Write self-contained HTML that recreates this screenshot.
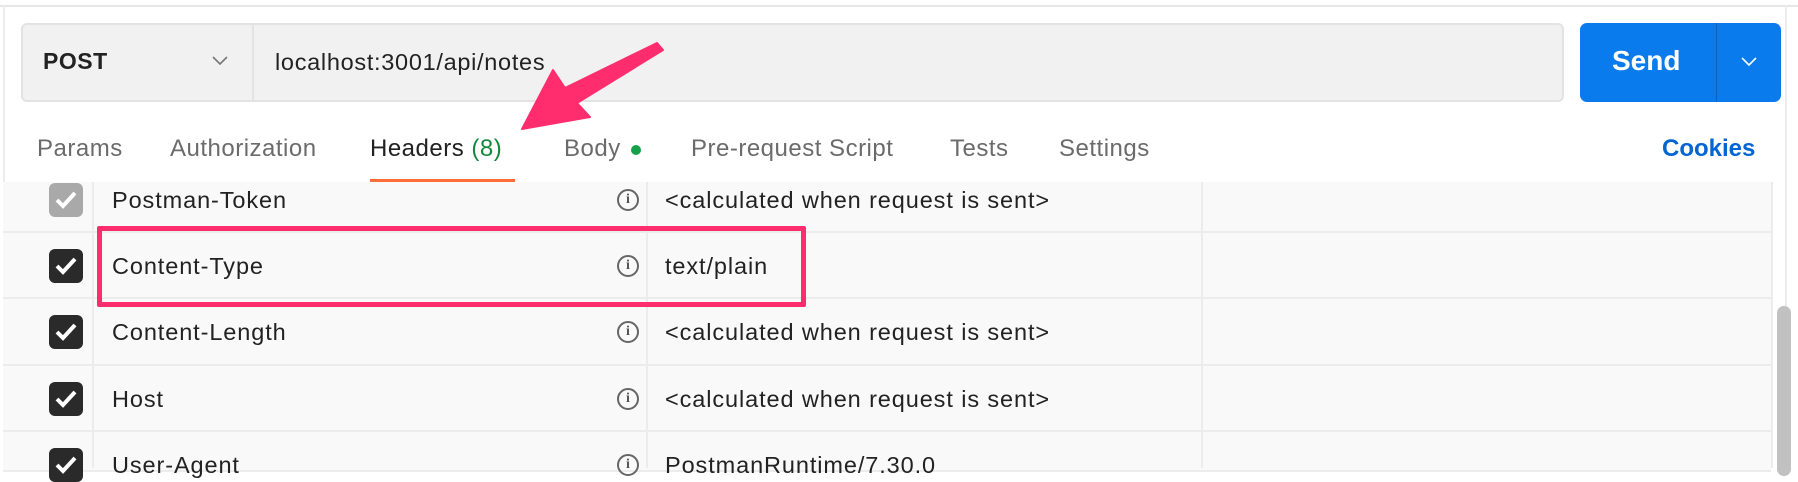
<!DOCTYPE html>
<html><head><meta charset="utf-8"><style>
*{margin:0;padding:0;box-sizing:border-box}
body{width:1798px;height:468px;overflow:hidden;background:#fff;font-family:"Liberation Sans",sans-serif;position:relative}
.a{position:absolute}
.tab{position:absolute;top:135px;font-size:24px;letter-spacing:0.5px;color:#6b6b6b;white-space:nowrap}
.row{position:absolute;left:3px;width:1768px;border-bottom:2px solid #ececec;background:#f9f9f9}
.cb{position:absolute;left:49px;width:34px;height:34px;border-radius:6px;background:#2a2a2a}
.cb svg{position:absolute;left:6px;top:7px}
.k{position:absolute;left:112px;font-size:23.5px;letter-spacing:0.9px;color:#222}
.v{position:absolute;left:665px;font-size:23.5px;letter-spacing:0.9px;color:#222;white-space:nowrap}
.i{position:absolute;left:617px;width:22px;height:22px;border:2px solid #666;border-radius:50%;font-size:14px;color:#555;text-align:center;line-height:18px;font-family:"Liberation Serif",serif;font-weight:bold}
</style></head><body>
<div class="a" style="left:0;top:5px;width:1798px;height:2px;background:#e6e6e6"></div>
<div class="a" style="left:3px;top:5px;width:2px;height:463px;background:#ececec"></div>
<div class="a" style="left:1785px;top:5px;width:2px;height:463px;background:#ececec"></div>
<div class="a" style="left:21px;top:23px;width:1543px;height:79px;background:#f1f1f1;border:2px solid #e3e3e3;border-radius:6px"></div>
<div class="a" style="left:252px;top:25px;width:2px;height:75px;background:#e3e3e3"></div>
<div class="a" style="left:43px;top:48px;font-size:23px;font-weight:bold;color:#222;letter-spacing:0.5px">POST</div>
<svg class="a" style="left:212px;top:56px" width="16" height="10"><path d="M1 1 L8 8 L15 1" stroke="#777" stroke-width="1.6" fill="none"/></svg>
<div class="a" style="left:275px;top:49px;font-size:23.5px;letter-spacing:0.7px;color:#222">localhost:3001/api/notes</div>
<div class="a" style="left:1580px;top:23px;width:201px;height:79px;background:#097bed;border-radius:7px"></div>
<div class="a" style="left:1716px;top:23px;width:1px;height:79px;background:#0a63c0"></div>
<div class="a" style="left:1612px;top:45px;font-size:28px;font-weight:bold;color:#fff">Send</div>
<svg class="a" style="left:1741px;top:57px" width="16" height="10"><path d="M1 1 L8 8 L15 1" stroke="#fff" stroke-width="1.6" fill="none"/></svg>
<div class="tab" style="left:37px">Params</div>
<div class="tab" style="left:170px">Authorization</div>
<div class="tab" style="left:370px;color:#212121">Headers <span style="color:#138a3e">(8)</span></div>
<div class="tab" style="left:564px">Body</div>
<div class="a" style="left:631px;top:145px;width:10px;height:10px;border-radius:50%;background:#17a04a"></div>
<div class="tab" style="left:691px">Pre-request Script</div>
<div class="tab" style="left:950px">Tests</div>
<div class="tab" style="left:1059px">Settings</div>
<div class="tab" style="left:1662px;color:#0265d2;font-weight:bold;letter-spacing:0">Cookies</div>
<div class="a" style="left:370px;top:179px;width:145px;height:3px;background:#ff6c37"></div>
<div class="row" style="top:182px;height:51px"></div>
<div class="row" style="top:233px;height:66px"></div>
<div class="row" style="top:299px;height:67px"></div>
<div class="row" style="top:366px;height:66px"></div>
<div class="row" style="top:432px;height:40px"></div>
<div class="a" style="left:92px;top:182px;width:2px;height:286px;background:#ececec"></div>
<div class="a" style="left:646px;top:182px;width:2px;height:286px;background:#ececec"></div>
<div class="a" style="left:1201px;top:182px;width:2px;height:286px;background:#ececec"></div>
<div class="a" style="left:1771px;top:182px;width:2px;height:286px;background:#ececec"></div>

<div class="cb" style="top:183px;background:#a9a9a9"><svg width="22" height="20"><path d="M2 10 L8 16 L20 3" stroke="#fff" stroke-width="4" fill="none"/></svg></div>
<div class="k" style="top:187px">Postman-Token</div><div class="i" style="top:189px">i</div><div class="v" style="top:187px">&lt;calculated when request is sent&gt;</div>

<div class="cb" style="top:249px"><svg width="22" height="20"><path d="M2 10 L8 16 L20 3" stroke="#fff" stroke-width="4" fill="none"/></svg></div>
<div class="k" style="top:253px">Content-Type</div><div class="i" style="top:255px">i</div><div class="v" style="top:253px">text/plain</div>

<div class="cb" style="top:315px"><svg width="22" height="20"><path d="M2 10 L8 16 L20 3" stroke="#fff" stroke-width="4" fill="none"/></svg></div>
<div class="k" style="top:319px">Content-Length</div><div class="i" style="top:321px">i</div><div class="v" style="top:319px">&lt;calculated when request is sent&gt;</div>

<div class="cb" style="top:382px"><svg width="22" height="20"><path d="M2 10 L8 16 L20 3" stroke="#fff" stroke-width="4" fill="none"/></svg></div>
<div class="k" style="top:386px">Host</div><div class="i" style="top:388px">i</div><div class="v" style="top:386px">&lt;calculated when request is sent&gt;</div>

<div class="cb" style="top:448px"><svg width="22" height="20"><path d="M2 10 L8 16 L20 3" stroke="#fff" stroke-width="4" fill="none"/></svg></div>
<div class="k" style="top:452px">User-Agent</div><div class="i" style="top:454px">i</div><div class="v" style="top:452px">PostmanRuntime/7.30.0</div>

<div class="a" style="left:1777px;top:306px;width:14px;height:170px;border-radius:7px;background:#c1c1c1"></div>
<div class="a" style="left:97px;top:226px;width:709px;height:81px;border:5px solid #ff2d6e;border-radius:2px"></div>
<svg class="a" style="left:0;top:0" width="1798" height="468"><path d="M657 43 L663 50 L577 103 L590 117 L522 129 L553 70 L565 88 Z" fill="#ff2d6e" stroke="#ff2d6e" stroke-width="2" stroke-linejoin="round"/></svg>
</body></html>
